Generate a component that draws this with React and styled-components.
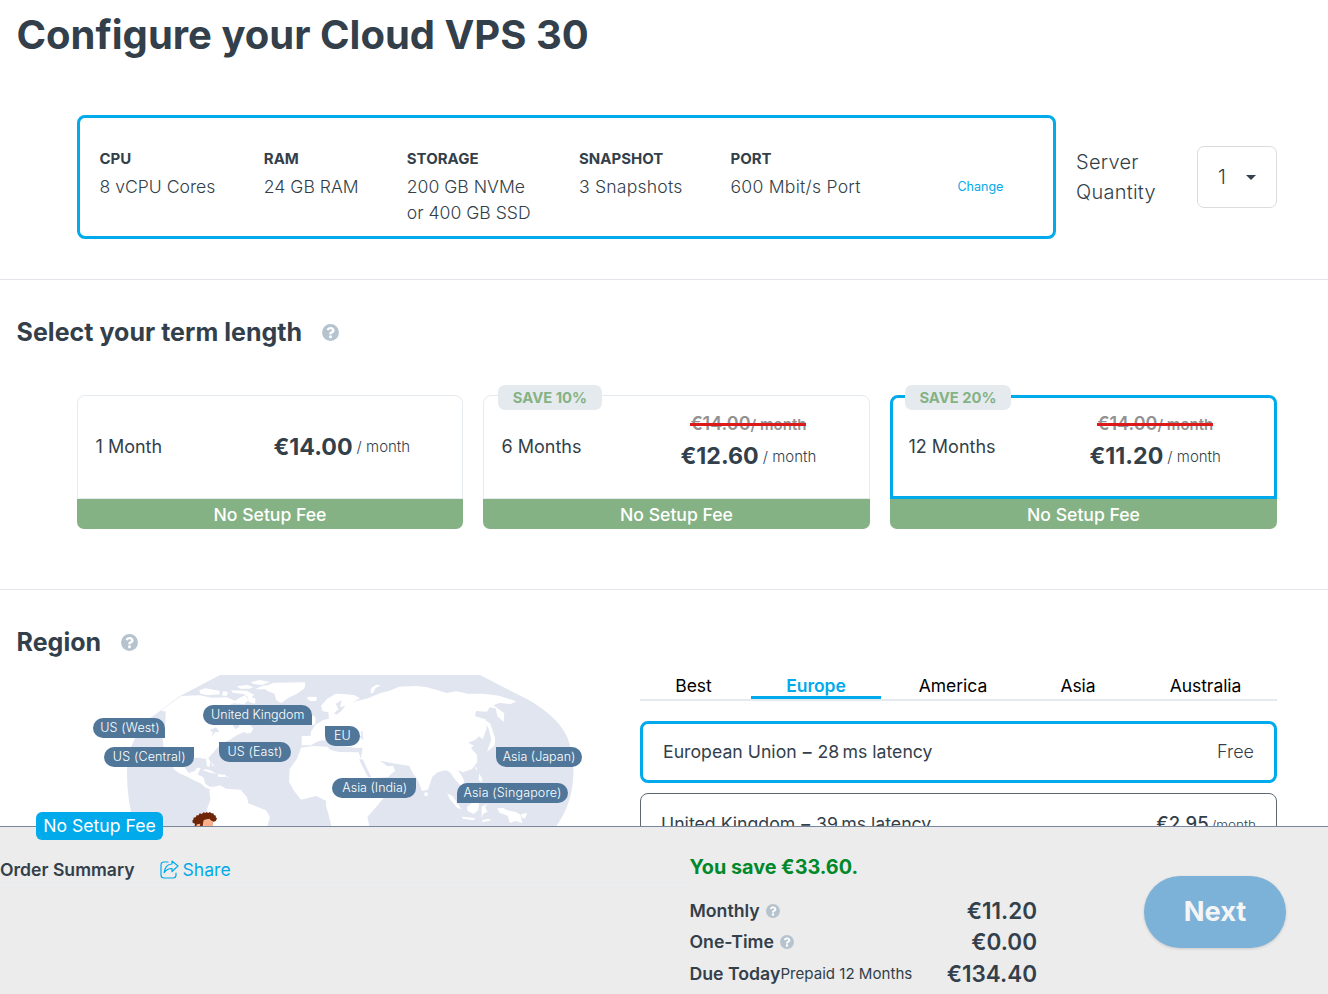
import React from "react";
import styled, { createGlobalStyle } from "styled-components";

const GlobalStyle = createGlobalStyle`
  * { box-sizing: border-box; }
  body {
    margin: 0;
    background: #fff;
    color: #333f4a;
    font-family: Inter, "Liberation Sans", sans-serif;
    font-size: 18px;
    font-weight: 400;
  }
  h1, h2, p { margin: 0; }
`;

const Page = styled.div`
  width: 1328px;
  height: 994px;
  overflow: hidden;
  display: flex;
  flex-direction: column;
`;

const PageTitle = styled.h1`
  height: 72px;
  padding: 10px 16.5px 0;
  font-size: 40px;
  line-height: 50px;
  font-weight: 700;
  white-space: nowrap;
`;

const SpecsSection = styled.section`
  display: flex;
  height: 208px;
  padding: 43px 51px 0 77px;
  border-bottom: 1px solid #e3e7eb;
`;

const SpecsBox = styled.div`
  display: flex;
  width: 979px;
  height: 124px;
  padding: 29px 20px 0 19.5px;
  border: 3px solid #00aaeb;
  border-radius: 8px;
`;

const Spec = styled.div`
  width: ${(props) => props.$width}px;
  font-size: 17.6px;
  line-height: 26px;
  font-weight: 300;
  letter-spacing: ${(props) => props.$spacing || 0}px;
  white-space: nowrap;
`;

const SpecLabel = styled.div`
  font-size: 15px;
  line-height: 24px;
  font-weight: 700;
  letter-spacing: 0;
  padding-bottom: 3px;
`;

const ChangeLink = styled.a`
  padding-top: 27px;
  color: #00aaeb;
  font-size: 12.5px;
  line-height: 26px;
`;

const QuantityLabel = styled.div`
  width: 141px;
  padding: 32px 0 0 20px;
  font-size: 20px;
  line-height: 30px;
  font-weight: 300;
  letter-spacing: 0.25px;
`;

const QuantitySelect = styled.div`
  display: flex;
  align-items: center;
  justify-content: space-between;
  width: 80px;
  height: 62px;
  margin-top: 31px;
  padding: 0 20px;
  border: 1px solid #dcdcdc;
  border-radius: 7px;
  font-size: 20px;
  font-weight: 300;
`;

const TermSection = styled.section`
  height: 310px;
  padding-top: 32px;
  border-bottom: 1px solid #e3e7eb;
`;

const SectionTitle = styled.h2`
  display: flex;
  align-items: center;
  gap: 20px;
  height: 40px;
  padding-left: 16.5px;
  font-size: 25px;
  line-height: 40px;
  font-weight: 700;
  letter-spacing: 0.03px;
`;

const TermCards = styled.div`
  display: grid;
  grid-template-columns: 386px 387px 387px;
  column-gap: 20px;
  padding: 43px 0 0 77px;
`;

const TermCard = styled.div`
  position: relative;
`;

const TermBody = styled.div`
  display: flex;
  align-items: center;
  height: 104px;
  padding-left: ${(props) => (props.$selected ? 15.5 : 17.5)}px;
  border: ${(props) => (props.$selected ? "3px solid #00aaeb" : "1px solid #e5eaef")};
  border-radius: 8px 8px 0 0;
`;

const TermName = styled.div`
  width: ${(props) => props.$width}px;
  flex: none;
  padding-bottom: 2px;
  font-size: 18px;
`;

const PriceColumn = styled.div`
  display: flex;
  flex-direction: column;
  align-items: center;
  flex: none;
  padding-bottom: ${(props) => (props.$discounted ? 12 : 1)}px;
`;

const OldPrice = styled.div`
  position: relative;
  height: 27px;
  margin-bottom: 3px;
  color: #929292;
  font-size: 18px;
  line-height: 27px;
  font-weight: 600;
  white-space: nowrap;

  small {
    font-size: 15px;
  }

  &::after {
    content: "";
    position: absolute;
    left: 0;
    right: 0;
    top: 13px;
    height: 3px;
    background: #dc1a1a;
  }
`;

const Price = styled.div`
  display: flex;
  align-items: center;
  font-size: 23.2px;
  line-height: 32px;
  font-weight: 700;
  white-space: nowrap;

  small {
    margin-left: 4px;
    padding-top: 1px;
    font-size: 15px;
    font-weight: 300;
  }
`;

const SetupFee = styled.div`
  height: 30px;
  background: #85b284;
  border-radius: 0 0 7px 7px;
  color: #fff;
  font-size: 17.6px;
  line-height: 31px;
  font-weight: 500;
  text-align: center;
`;

const SaveBadge = styled.div`
  position: absolute;
  top: -10px;
  left: 15px;
  width: ${(props) => props.$width}px;
  height: 25px;
  background: #e5eaef;
  border-radius: 7px;
  color: #85b284;
  font-size: 14.8px;
  line-height: 26px;
  font-weight: 700;
  text-align: center;
`;

const RegionSection = styled.section`
  flex: 1;
  min-height: 0;
  overflow: hidden;
  padding-top: 32px;
`;

const RegionContent = styled.div`
  display: flex;
  padding-top: 13px;
`;

const MapArea = styled.div`
  position: relative;
  width: 640px;
  padding-left: 120px;

  svg {
    display: block;
  }
`;

// pins sit freely on the map
const MapPin = styled.div`
  position: absolute;
  left: ${(props) => props.$x}px;
  top: ${(props) => props.$y}px;
  width: ${(props) => props.$width}px;
  height: 20px;
  padding-left: ${(props) => props.$indent ?? 1.5}px;
  background: #507799;
  border-radius: ${(props) => props.$radius};
  color: #fff;
  font-size: 12.5px;
  line-height: 20px;
  font-weight: 300;
  letter-spacing: ${(props) => props.$spacing ?? 0.15}px;
  text-align: center;
  white-space: nowrap;
`;

const RegionPicker = styled.div`
  width: 637px;
`;

const Tabs = styled.div`
  display: flex;
  height: 26px;
  margin-bottom: 20px;
  border-bottom: 2px solid #e5eaef;
`;

const Tab = styled.div`
  flex: none;
  width: ${(props) => props.$width}px;
  height: 24px;
  margin-left: ${(props) => props.$gap}px;
  border-bottom: ${(props) => (props.$active ? "3px solid #00aaeb" : "none")};
  color: ${(props) => (props.$active ? "#00aaeb" : "#000")};
  font-size: 17.5px;
  line-height: 21px;
  font-weight: ${(props) => (props.$active ? 600 : 400)};
  letter-spacing: -0.05px;
  text-align: center;
`;

const RegionOption = styled.div`
  display: flex;
  align-items: center;
  justify-content: space-between;
  height: 62px;
  margin-bottom: 10px;
  padding: 0 20px;
  border: ${(props) => (props.$selected ? "3px solid #00aaeb" : "1px solid #5e6872")};
  border-radius: 8px;
  font-size: 17.7px;
  line-height: 26px;
`;

const Dash = styled.span`
  margin: 0 1px;
  font-weight: 500;
`;

const Free = styled.span`
  font-size: 18px;
  font-weight: 300;
`;

const RegionPrice = styled.span`
  font-size: 18.5px;
  font-weight: 500;

  small {
    margin-left: 3px;
    font-size: 13.5px;
    font-weight: 300;
  }
`;

const Footer = styled.footer`
  position: relative;
  display: flex;
  flex: none;
  height: 168px;
  border-top: 1px solid #7a879b;
  background: #ececec;
`;

const FooterBadge = styled.div`
  position: absolute;
  left: 36px;
  top: -15px;
  width: 127px;
  height: 28px;
  background: #00aaeb;
  border-radius: 6px;
  color: #fff;
  font-size: 17.6px;
  line-height: 28px;
  text-align: center;
`;

const Summary = styled.div`
  display: flex;
  width: 689.5px;
  height: 56px;
  padding-top: 30px;
  font-size: 17.6px;
  line-height: 26px;
  font-weight: 600;
  border-bottom: 1px solid #e6ebf0;
`;

const Share = styled.a`
  display: flex;
  align-items: center;
  gap: 4px;
  margin-left: 25px;
  color: #00aaeb;
  font-weight: 400;
`;

const Totals = styled.div`
  width: 347.5px;
  padding-top: 25px;
`;

const Saving = styled.div`
  height: 43px;
  color: #00892a;
  font-size: 19.8px;
  line-height: 30px;
  font-weight: 700;
`;

const TotalRow = styled.div`
  display: flex;
  align-items: center;
  height: 31.300px;
  font-size: 17.7px;
  font-weight: 600;
  white-space: nowrap;

  svg {
    margin-left: 6px;
  }

  small {
    font-size: 15.1px;
    font-weight: 400;
  }
`;

const Amount = styled.span`
  margin-left: auto;
  font-size: 22.5px;
`;

const NextButton = styled.button`
  width: 142px;
  height: 72px;
  margin: 49px 0 0 107px;
  padding: 0 0 2px;
  border: 0;
  border-radius: 36px;
  background: #7cb1d8;
  box-shadow: 0 1px 3px rgba(0, 0, 0, 0.15);
  color: #f5f5f5;
  font-family: inherit;
  font-size: 27.3px;
  font-weight: 700;
`;

function HelpIcon({ size = 17 }) {
  return (
    <svg width={size} height={size} viewBox="0 0 512 512">
      <circle cx="256" cy="256" r="254" fill="#b5c3ce" />
      <path
        fill="#fff"
        d="M262.7 90c-54.500 0-89.300 23-116.500 63.800-3.500 5.300-2.400 12.400 2.700 16.300l34.700 26.300c5.200 3.900 12.600 3 16.700-2.100 17.900-22.700 30.100-35.800 57.300-35.800 20.400 0 45.700 13.100 45.700 33 0 15-12.400 22.700-32.500 34C247.100 238.500 216 254.900 216 296v4c0 6.600 5.400 12 12 12h56c6.600 0 12-5.400 12-12v-1.300c0-28.500 83.200-29.600 83.200-106.700 0-58-60.200-102-116.500-102zM256 338c-25.400 0-46 20.600-46 46s20.600 46 46 46 46-20.600 46-46-20.600-46-46-46z"
      />
    </svg>
  );
}

function ShareIcon() {
  return (
    <svg width="19" height="19" viewBox="0 0 19 19" fill="none" stroke="#00aaeb" strokeWidth="1.2" strokeLinejoin="round" strokeLinecap="round">
      <path d="M8 2H4Q1 2 1 5V15Q1 18 4 18H13Q16 18 16 15V13" />
      <path d="M12 1L18 6L12 11.500V8.500C8 8.500 6 10 4.200 12.700C4.700 7.500 7.500 4.200 12 4Z" />
    </svg>
  );
}

function WorldMap() {
  return (
    <svg width="460" height="151" viewBox="120 45 1380 453">
      <path fill="#e1e5f0" d="M420 45H1200L1330 112C1395 145 1447 190 1465 240Q1481 286 1480 342Q1478 430 1429 498H166Q141 430 141 342Q141 240 210 174L300 108Z" />
      <g fill="#fff">
        {/* north america */}
        <path d="M210 174L304 108L360 106L395 113L440 112L465 122L482 112L496 106L505 121L493 133L460 130L440 140L430 154L450 180L466 208L478 200L476 182L494 180L510 192L516 205L494 215L470 226L450 239L424 250L402 275L385 294L391 305L388 322L381 318L378 297L356 293L330 293L314 303L315 324L326 339L344 333L350 323L362 324L353 344L370 351L376 371L389 380L402 380L391 389L375 382L362 370L344 362L322 350L298 340L281 328L276 307L263 322L264 304L252 270L247 225L256 190L257 155L239 150Z" />
        <path d="M358 91L376 85L418 92L419 103L384 106L361 101ZM430 94L444 96L440 108L425 106ZM453 91L500 92L522 104L512 115L490 102L458 98ZM470 79L503 75L520 82L508 86L482 86ZM513 66L540 60L570 66L545 75L520 72ZM525 88L548 77L570 75L552 88ZM500 106L527 116L525 131L507 126Z" />
        <path d="M548 83L580 68L676 67L674 85L651 101L623 115L604 130L589 121L583 101L565 94ZM684 110L711 111L709 122L694 124L681 118ZM493 211L510 194L520 206L512 220L496 220Z" />
        <path d="M368 330Q385 323 408 342L390 338ZM412 343L437 344L438 351L416 351ZM391 304L403 317L399 319ZM440 349L447 351L443 353Z" />
        {/* south america */}
        <path d="M402 380L420 376L438 386L482 389L501 412L505 430L558 451L570 472L562 498H396L389 470L380 450L391 419L388 392Z" />
        {/* eurasia */}
        <path d="M665 229L692 227L693 215L705 196L729 180L747 176L745 157L727 153L723 137L741 117L767 101L798 103L822 105L840 115L818 126L864 115L901 99L929 92L957 80L1010 78L1040 82L1073 91L1100 99L1130 94L1163 101L1211 101L1257 107L1309 124L1293 132L1258 129L1240 136L1273 160L1271 186L1252 169L1247 145L1229 142L1221 155L1188 153L1185 169L1217 178L1220 205L1208 238L1197 229L1185 240L1164 248L1182 257L1173 264L1191 285L1192 306L1176 327L1148 337L1134 330L1144 346L1153 363L1148 382L1126 360L1116 345L1109 336L1098 331L1073 337L1057 350L1044 389L1026 393L1012 357L1000 342L987 317L956 313L900 302L922 319L939 317L945 332L923 352L873 355L846 314L842 298L848 263L822 263L791 258L767 245L748 243L725 241L709 246L694 256L665 256Z" />
        <path d="M700 166L707 174L706 193L694 196L693 170ZM681 180L691 184L689 195L679 192ZM872 100L874 84L889 74L903 76L887 84L879 99Z" />
        {/* africa */}
        <path d="M663 263L700 258L742 260L752 270L778 276L836 277L843 298L862 332L872 358L918 354L929 389L909 416L884 446L862 471L868 498H754L745 461L738 438L738 422L709 408L663 419L640 389L627 365L629 327L652 294Z" />
        {/* islands of the far east */}
        <path d="M1210 178L1230 190L1238 211L1245 234L1244 256L1221 276L1228 255L1234 240L1226 206ZM1035 395L1044 400L1042 409L1033 407ZM1101 400L1118 409L1144 447L1133 445L1110 418ZM1146 470L1185 474L1182 481L1148 476ZM1161 440L1176 428L1197 430L1195 450L1181 462L1163 453ZM1205 440L1223 431L1215 441L1223 455L1210 461L1205 475ZM1197 340L1207 356L1205 367L1196 360ZM1252 445L1270 444L1283 451L1308 456L1321 464L1327 489L1306 483L1290 489L1283 467L1258 458ZM1322 463L1342 459L1335 475L1327 474ZM1205 481L1225 476L1235 480L1210 487ZM1185 320L1191 324L1189 332Z" />
      </g>
      <g fill="#e1e5f0">
        <path d="M388 211L408 202L418 215L405 216L396 231L398 215ZM767 132L785 120L780 142L796 137L784 153L770 164L762 160L776 147ZM837 230L846 226L842 218L847 210L850 240ZM837 298L848 298L873 350L864 352Z" />
      </g>
      {/* mascot peeking over the summary bar */}
      <path
        fill="#6f2507"
        d="M337 482L341 477L340 473L347 472L350 466L356 466L359 460L366 462L370 457L376 459L380 456L384 459L390 456L394 460L400 460L402 465L408 467L407 472L411 475L408 482L402 485L395 484L386 478L372 480L368 498H344L345 491L338 488Z"
      />
      <path fill="#f9af8a" d="M371 481L388 476L399 487V498H370ZM351 493L361 491L360 498H349Z" />
    </svg>
  );
}

const specs = [
  { label: "CPU", lines: ["8 vCPU Cores"], width: 164.3 },
  { label: "RAM", lines: ["24 GB RAM"], width: 143 },
  { label: "STORAGE", lines: ["200 GB NVMe", "or 400 GB SSD"], width: 172.2 },
  { label: "SNAPSHOT", lines: ["3 Snapshots"], width: 151.5, spacing: 0.2 },
  { label: "PORT", lines: ["600 Mbit/s Port"], width: 227, spacing: 0.25 },
];

const terms = [
  { name: "1 Month", price: "€14.00", nameWidth: 178 },
  { name: "6 Months", price: "€12.60", save: "SAVE 10%", badge: 104, nameWidth: 179 },
  { name: "12 Months", price: "€11.20", save: "SAVE 20%", badge: 106, nameWidth: 181, selected: true },
];

const pins = [
  { name: "US (West)", x: 93, y: 42.5, width: 72, radius: "10px 10px 0 10px", indent: 2 },
  { name: "United Kingdom", x: 202.5, y: 29.500, width: 109, radius: "10px 10px 0 10px", spacing: 0 },
  { name: "EU", x: 325, y: 51, width: 35, radius: "0 10px 10px 10px", indent: 0 },
  { name: "US (Central)", x: 103.5, y: 72, width: 90, radius: "10px 0 10px 10px" },
  { name: "US (East)", x: 219, y: 67, width: 72, radius: "0 10px 10px 10px", indent: 0 },
  { name: "Asia (Japan)", x: 496, y: 72, width: 86, radius: "0 10px 10px 10px", spacing: 0, indent: 0 },
  { name: "Asia (India)", x: 332, y: 103, width: 84, radius: "10px 0 10px 10px", spacing: 0 },
  { name: "Asia (Singapore)", x: 457, y: 108, width: 111, radius: "10px 10px 10px 0", indent: 0 },
];

const tabs = [
  { name: "Best", width: 107, gap: 0 },
  { name: "Europe", width: 130, gap: 4 },
  { name: "America", width: 144, gap: 0 },
  { name: "Asia", width: 106, gap: 0 },
  { name: "Australia", width: 149, gap: 0 },
];

export default function App() {
  return (
    <Page>
      <GlobalStyle />
      <PageTitle>Configure your Cloud VPS 30</PageTitle>

      <SpecsSection>
        <SpecsBox>
          {specs.map((spec) => (
            <Spec key={spec.label} $width={spec.width} $spacing={spec.spacing}>
              <SpecLabel>{spec.label}</SpecLabel>
              {spec.lines.map((line) => (
                <div key={line}>{line}</div>
              ))}
            </Spec>
          ))}
          <ChangeLink>Change</ChangeLink>
        </SpecsBox>
        <QuantityLabel>
          Server
          <br />
          Quantity
        </QuantityLabel>
        <QuantitySelect>
          1
          <svg width="10" height="5" viewBox="0 0 10 5">
            <path d="M0 0H10L5 5Z" fill="#333f4a" />
          </svg>
        </QuantitySelect>
      </SpecsSection>

      <TermSection>
        <SectionTitle>
          Select your term length <HelpIcon />
        </SectionTitle>
        <TermCards>
          {terms.map((term) => (
            <TermCard key={term.name}>
              <TermBody $selected={term.selected}>
                <TermName $width={term.nameWidth}>{term.name}</TermName>
                <PriceColumn $discounted={!!term.save}>
                  {term.save && (
                    <OldPrice>
                      €14.00<small>/ month</small>
                    </OldPrice>
                  )}
                  <Price>
                    {term.price}
                    <small>/ month</small>
                  </Price>
                </PriceColumn>
              </TermBody>
              <SetupFee>No Setup Fee</SetupFee>
              {term.save && <SaveBadge $width={term.badge}>{term.save}</SaveBadge>}
            </TermCard>
          ))}
        </TermCards>
      </TermSection>

      <RegionSection>
        <SectionTitle>
          Region <HelpIcon />
        </SectionTitle>
        <RegionContent>
          <MapArea>
            <WorldMap />
            {pins.map((pin) => (
              <MapPin
                key={pin.name}
                $x={pin.x}
                $y={pin.y}
                $width={pin.width}
                $radius={pin.radius}
                $spacing={pin.spacing}
                $indent={pin.indent}
              >
                {pin.name}
              </MapPin>
            ))}
          </MapArea>
          <RegionPicker>
            <Tabs>
              {tabs.map((tab) => (
                <Tab key={tab.name} $width={tab.width} $gap={tab.gap} $active={tab.name === "Europe"}>
                  {tab.name}
                </Tab>
              ))}
            </Tabs>
            <RegionOption $selected>
              <span>
                European Union <Dash>–</Dash> 28{"\u2009"}ms latency
              </span>
              <Free>Free</Free>
            </RegionOption>
            <RegionOption>
              <span>
                United Kingdom <Dash>–</Dash> 39{"\u2009"}ms latency
              </span>
              <RegionPrice>
                €2.95<small>/month</small>
              </RegionPrice>
            </RegionOption>
          </RegionPicker>
        </RegionContent>
      </RegionSection>

      <Footer>
        <FooterBadge>No Setup Fee</FooterBadge>
        <Summary>
          Order Summary
          <Share>
            <ShareIcon />
            Share
          </Share>
        </Summary>
        <Totals>
          <Saving>You save €33.60.</Saving>
          <TotalRow>
            Monthly <HelpIcon size={14} />
            <Amount>€11.20</Amount>
          </TotalRow>
          <TotalRow>
            One-Time <HelpIcon size={14} />
            <Amount>€0.00</Amount>
          </TotalRow>
          <TotalRow>
            Due Today<small>Prepaid 12 Months</small>
            <Amount>€134.40</Amount>
          </TotalRow>
        </Totals>
        <NextButton>Next</NextButton>
      </Footer>
    </Page>
  );
}
